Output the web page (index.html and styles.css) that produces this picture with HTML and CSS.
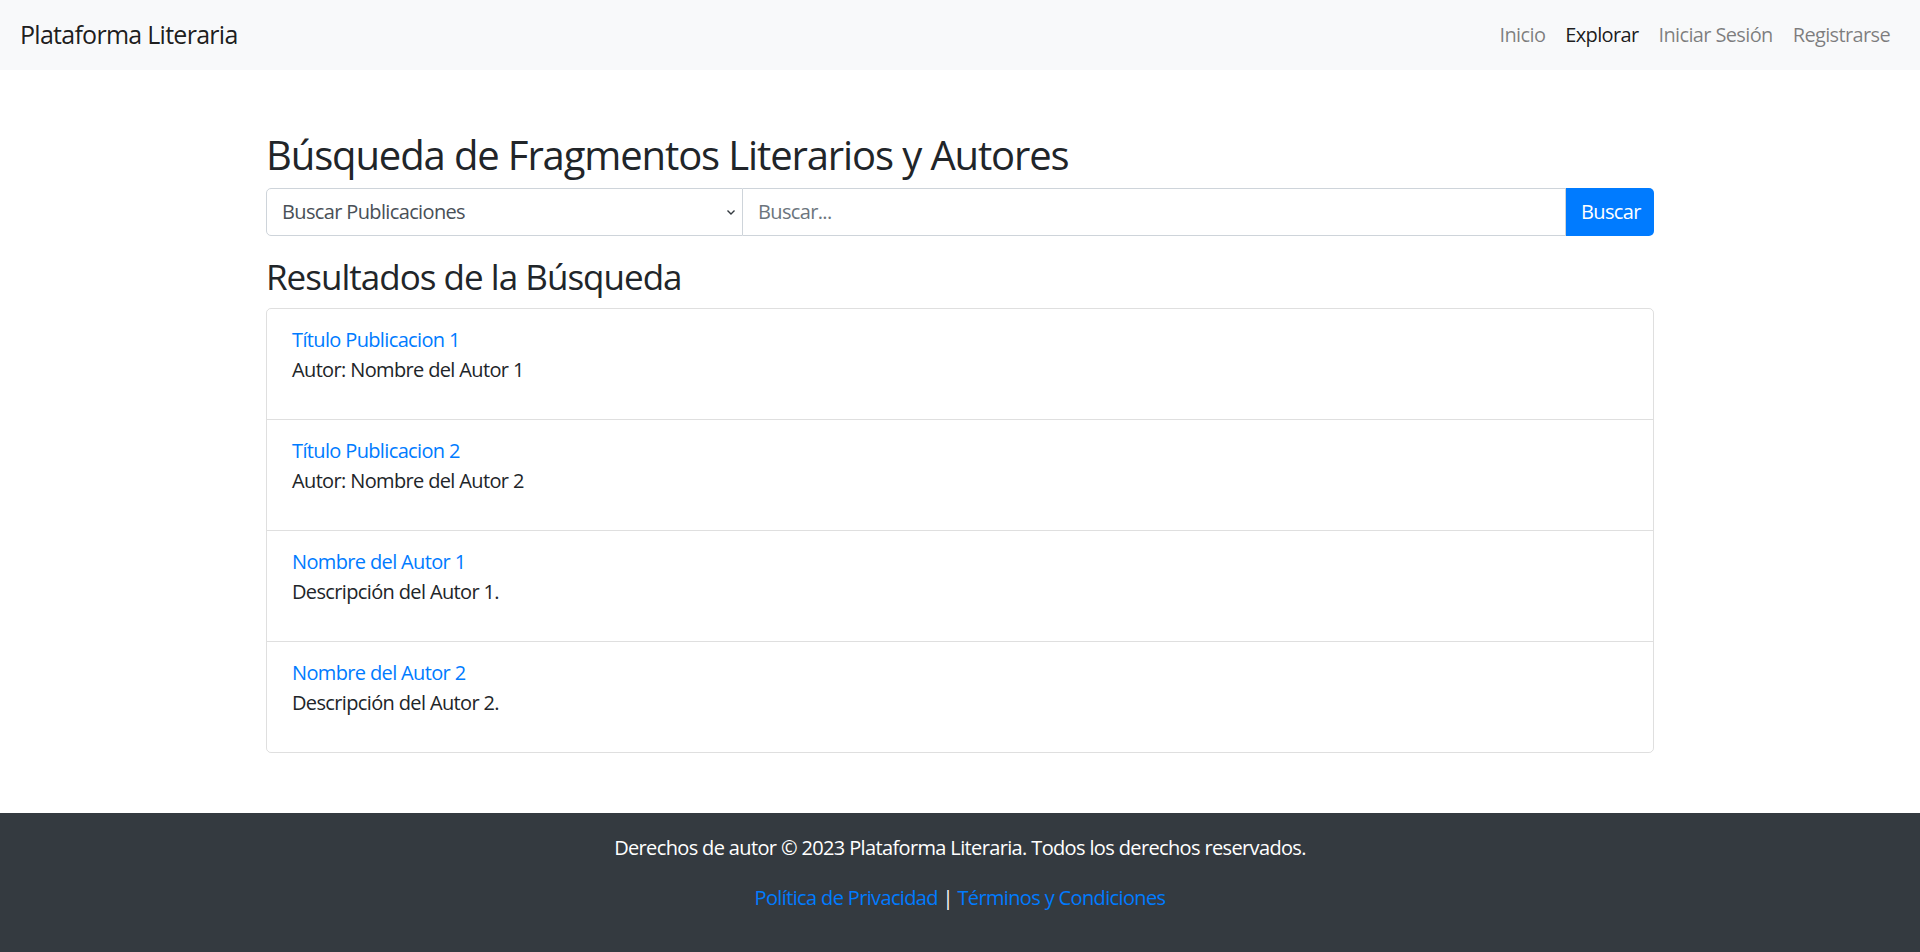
FILE: index.html
```html
<!DOCTYPE html>
<html lang="es">
<head>
<meta charset="utf-8">
<title>Plataforma Literaria</title>
<link rel="stylesheet" href="styles.css">
</head>
<body>
<nav class="navbar">
  <a class="brand" href="#">Plataforma Literaria</a>
  <ul class="nav">
    <li><a class="nav-link" href="#">Inicio</a></li>
    <li><a class="nav-link active" href="#">Explorar</a></li>
    <li><a class="nav-link" href="#">Iniciar Sesión</a></li>
    <li><a class="nav-link" href="#">Registrarse</a></li>
  </ul>
</nav>
<main class="container">
  <h2 class="title">Búsqueda de Fragmentos Literarios y Autores</h2>
  <form class="search">
    <div class="select">
      <span class="select-text">Buscar Publicaciones</span>
      <svg class="chev" width="10" height="8" viewBox="0 0 10 8"><path d="M1.5 2.5 L5 6 L8.5 2.5" fill="none" stroke="#343a40" stroke-width="1.4"/></svg>
    </div>
    <div class="input"><span class="placeholder">Buscar...</span></div>
    <button class="btn" type="button">Buscar</button>
  </form>
  <h3 class="subtitle">Resultados de la Búsqueda</h3>
  <ul class="results">
    <li class="item"><a href="#">Título Publicacion 1</a><p>Autor: Nombre del Autor 1</p></li>
    <li class="item"><a href="#">Título Publicacion 2</a><p>Autor: Nombre del Autor 2</p></li>
    <li class="item"><a href="#">Nombre del Autor 1</a><p>Descripción del Autor 1.</p></li>
    <li class="item"><a href="#">Nombre del Autor 2</a><p>Descripción del Autor 2.</p></li>
  </ul>
</main>
<footer class="footer">
  <p>Derechos de autor © 2023 Plataforma Literaria. Todos los derechos reservados.</p>
  <p><a href="#">Política de Privacidad</a> | <a href="#">Términos y Condiciones</a></p>
</footer>
</body>
</html>
```
FILE: styles.css
```css
* { box-sizing: border-box; }
html, body { margin: 0; padding: 0; }
body {
  font-family: "Open Sans", "Noto Sans", "Liberation Sans", sans-serif;
  font-size: 20px;
  line-height: 30px;
  letter-spacing: -0.032em;
  color: #212529;
  background: #fff;
}
a { color: #007bff; text-decoration: none; }

.navbar {
  height: 70px;
  background: #f8f9fa;
  display: flex;
  align-items: center;
  justify-content: space-between;
  padding: 0 20px;
}
.brand {
  font-size: 25px;
  line-height: 37.5px;
  color: rgba(0,0,0,.9);
  letter-spacing: -0.029em;
}
.nav {
  list-style: none;
  margin: 0;
  padding: 0;
  display: flex;
}
.nav-link {
  display: block;
  padding: 10px 10px;
  color: rgba(0,0,0,.5);
}
.nav-link.active { color: rgba(0,0,0,.9); }

.container {
  width: 1388px;
  margin: 0 auto;
  padding-top: 61px;
  padding-bottom: 60px;
}
.title {
  font-size: 40px;
  line-height: 48px;
  font-weight: 400;
  letter-spacing: -0.028em;
  margin: 0 0 9px;
}
.search {
  display: flex;
  height: 48px;
  margin: 0 0 20px;
}
.select {
  width: 477px;
  border: 1px solid #ced4da;
  border-radius: 5px 0 0 5px;
  display: flex;
  align-items: center;
  justify-content: space-between;
  padding: 0 6px 0 15px;
  color: #495057;
}
.input {
  flex: 1;
  border: 1px solid #ced4da;
  border-left: none;
  display: flex;
  align-items: center;
  padding: 0 15px;
}
.placeholder { color: #6c757d; }
.btn {
  width: 88px;
  border: 0;
  background: #007bff;
  color: #fff;
  font: inherit;
  letter-spacing: inherit;
  border-radius: 0 5px 5px 0;
  padding: 0 15px;
}
.subtitle {
  font-size: 35px;
  line-height: 42px;
  font-weight: 400;
  letter-spacing: -0.028em;
  margin: 0 0 10px;
}
.results {
  list-style: none;
  margin: 0;
  padding: 0;
  border: 1px solid rgba(0,0,0,.125);
  border-radius: 5px;
}
.item {
  padding: 16px 25px 14px;
}
.item + .item { border-top: 1px solid rgba(0,0,0,.125); }
.item a { display: block; }
.item p { margin: 0 0 20px; }

.footer {
  background: #343a40;
  color: #fff;
  text-align: center;
  padding: 20px 0;
}
.footer p { margin: 0 0 20px; }
```
